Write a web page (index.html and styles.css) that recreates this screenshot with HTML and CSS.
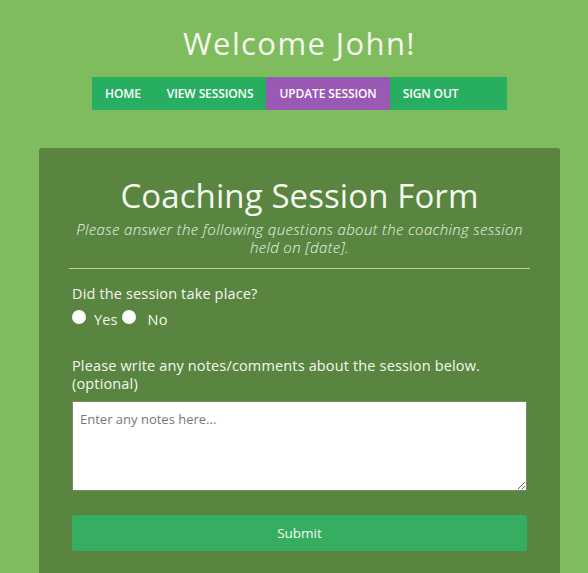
FILE: index.html
```html
<!DOCTYPE html>
<html>
<head>
<meta charset="utf-8">
<link rel="stylesheet" href="styles.css">
</head>
<body>
<div class="page">
  <h1 class="welcome">Welcome John!</h1>
  <nav class="nav">
    <a class="nav-item">HOME</a>
    <a class="nav-item">VIEW SESSIONS</a>
    <a class="nav-item active">UPDATE SESSION</a>
    <a class="nav-item">SIGN OUT</a>
  </nav>
  <div class="card">
    <h2 class="card-title">Coaching Session Form</h2>
    <p class="card-sub">Please answer the following questions about the coaching session held on [date].</p>
    <hr class="divider">
    <form class="form">
      <div class="q">Did the session take place?</div>
      <div class="radios">
        <span class="radio"></span><span class="radio-label">Yes</span><span class="radio"></span><span class="radio-label">No</span>
      </div>
      <div class="q q2">Please write any notes/comments about the session below. (optional)</div>
      <textarea class="notes" placeholder="Enter any notes here..."></textarea>
      <button type="button" class="submit">Submit</button>
    </form>
  </div>
</div>
</body>
</html>
```
FILE: styles.css
```css
html, body {
  margin: 0;
  padding: 0;
  background: #7fbc5e;
  height: 100%;
  overflow: hidden;
}
.page {
  padding-left: 11px;
  font-family: "Open Sans", "DejaVu Sans", sans-serif;
  color: #f4f8ee;
}
.welcome {
  margin: 0;
  padding-top: 24px;
  font-size: 31px;
  line-height: 38px;
  font-weight: 400;
  letter-spacing: 1.4px;
  text-align: center;
}
.nav {
  width: 415px;
  height: 33px;
  margin: 15px auto 0;
  background: #27ae60;
  display: flex;
  align-items: stretch;
}
.nav-item {
  display: flex;
  align-items: center;
  padding: 0 13px;
  font-size: 12px;
  font-weight: 600;
  color: #fff;
  letter-spacing: -0.1px;
}
.nav-item.active {
  background: #9b59b6;
}
.card {
  width: 461px;
  margin: 38px auto 0;
  padding: 26px 30px 40px;
  background: #598540;
  border-radius: 3px;
}
.card-title {
  margin: 0;
  font-size: 33px;
  line-height: 44px;
  font-weight: 400;
  letter-spacing: 0.1px;
  text-align: center;
}
.card-sub {
  margin: 2px 0 0;
  font-size: 15px;
  line-height: 18px;
  font-style: italic;
  font-weight: 300;
  letter-spacing: 0.35px;
  text-align: center;
  color: #eef4e6;
}
.divider {
  margin: 12px 0 0;
  border: 0;
  border-top: 1px solid #b3d89c;
}
.form {
  margin: 0 3px;
  display: flex;
  flex-direction: column;
}
.q {
  margin-top: 16px;
  font-size: 14.5px;
  line-height: 18px;
  letter-spacing: 0.15px;
}
.radios {
  display: flex;
  align-items: center;
  height: 22px;
  margin-top: 5px;
  font-size: 14.5px;
  letter-spacing: 0.15px;
}
.radio {
  width: 14px;
  height: 14px;
  border-radius: 50%;
  background: #fff;
  margin-top: -4px;
}
.radio-label {
  margin: 0 4px 0 8px;
}
.radios .radio-label:last-child {
  margin-left: 12px;
}
.q2 {
  margin-top: 27px;
}
.notes {
  margin-top: 8px;
  height: 90px;
  box-sizing: border-box;
  border: 1px solid #6f8f60;
  border-radius: 0;
  padding: 8px 7px 6px;
  font-family: "Open Sans", "DejaVu Sans", sans-serif;
  font-size: 13px;
  resize: vertical;
  background: #fff;
}
.notes::placeholder {
  color: #777;
}
.submit {
  margin-top: 24px;
  height: 36px;
  border: 0;
  border-radius: 2px;
  background: #35ae61;
  color: #f4f8ee;
  font-family: "Open Sans", "DejaVu Sans", sans-serif;
  font-size: 13.5px;
}
```
